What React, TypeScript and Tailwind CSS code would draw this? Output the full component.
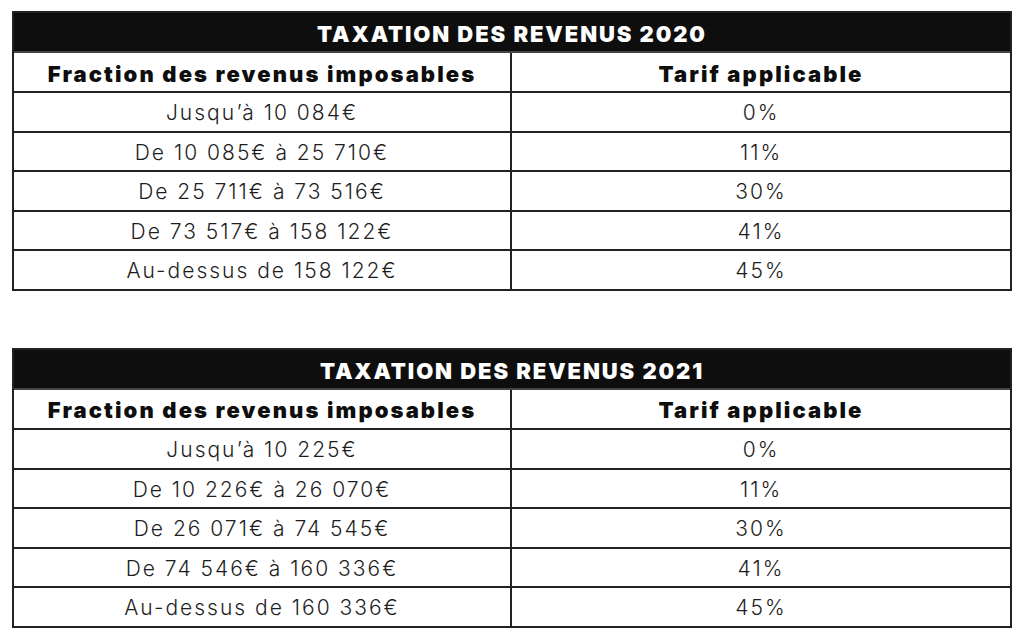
import React from "react";

type Row = [string, string];

const t2020: Row[] = [
  ["Jusqu’à 10 084€", "0%"],
  ["De 10 085€ à 25 710€", "11%"],
  ["De 25 711€ à 73 516€", "30%"],
  ["De 73 517€ à 158 122€", "41%"],
  ["Au-dessus de 158 122€", "45%"],
];

const t2021: Row[] = [
  ["Jusqu’à 10 225€", "0%"],
  ["De 10 226€ à 26 070€", "11%"],
  ["De 26 071€ à 74 545€", "30%"],
  ["De 74 546€ à 160 336€", "41%"],
  ["Au-dessus de 160 336€", "45%"],
];

function Table({ title, rows }: { title: string; rows: Row[] }) {
  return (
    <div className="w-[1000px] border-2 border-[#222] flex flex-col">
      <div className="h-[38px] bg-[#0e0e0e] flex items-center justify-center pt-[5px] text-white font-black text-[22px] tracking-[1.9px]">
        {title}
      </div>
      <div className="grid grid-cols-2 h-[40px] border-t-2 border-[#444]">
        <div className="flex items-center justify-center pt-[4px] font-black text-[22px] text-[#0e0e0e] border-r-2 border-[#222] tracking-[2.1px]">
          Fraction des revenus imposables
        </div>
        <div className="flex items-center justify-center pt-[4px] font-black text-[22px] text-[#0e0e0e] tracking-[2.1px]">
          Tarif applicable
        </div>
      </div>
      {rows.map(([a, b], i) => (
        <div key={i} className="grid grid-cols-2 h-[39.6px] border-t-2 border-[#222]">
          <div className="flex items-center justify-center pt-[2px] font-light text-[21px] text-[#1e1e1e] border-r-2 border-[#222] tracking-[2px]">
            {a}
          </div>
          <div className="flex items-center justify-center pt-[2px] font-light text-[21px] text-[#1e1e1e] tracking-[2px]">
            {b}
          </div>
        </div>
      ))}
    </div>
  );
}

export default function App() {
  return (
    <div
      className="w-[1024px] h-[638px] bg-white pt-[11px] pl-[12px] flex flex-col gap-[57px]"
      style={{ fontFamily: "Inter, 'Noto Sans', sans-serif" }}
    >
      <Table title="TAXATION DES REVENUS 2020" rows={t2020} />
      <Table title="TAXATION DES REVENUS 2021" rows={t2021} />
    </div>
  );
}
